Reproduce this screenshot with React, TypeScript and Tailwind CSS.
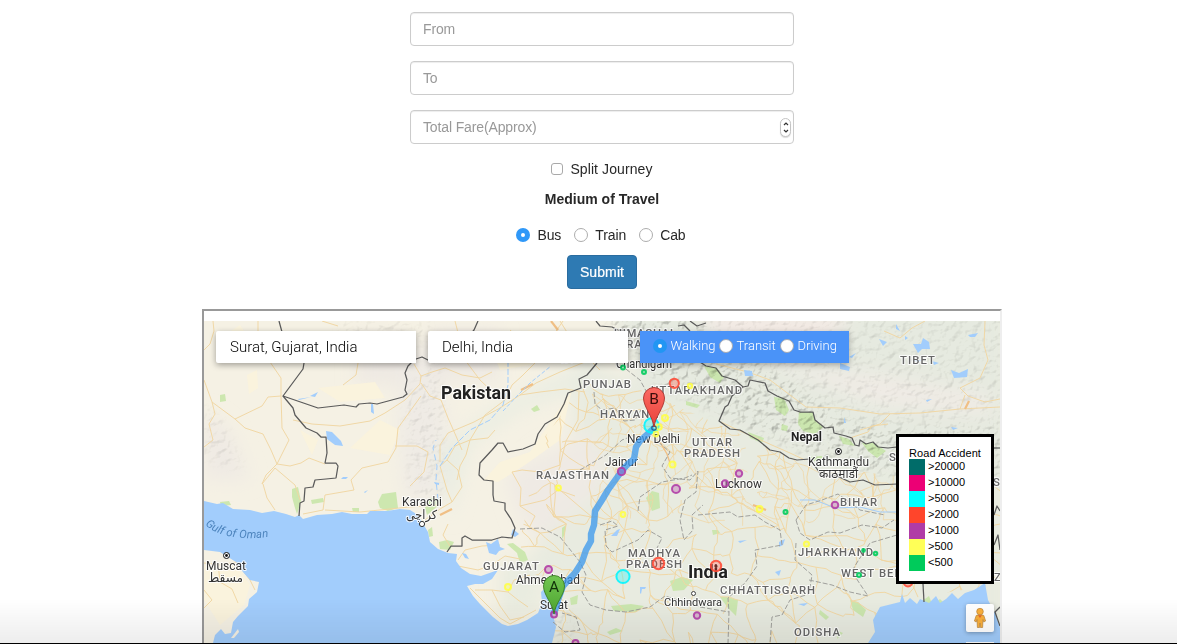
import React, { useState } from "react";

type Pt = [number, number];

const LAND = "#f5f1e4";
const WATER = "#a2cdfc";

/* ---------- road network ---------- */

function seeded(seed: number) {
  let s = seed;
  return () => {
    s = (s * 16807) % 2147483647;
    return s / 2147483647;
  };
}

function roadWeb(x0: number, y0: number, cols: number, rows: number, step: number, density: number, seed: number) {
  const rnd = seeded(seed);
  const nodes: Pt[][] = [];
  for (let r = 0; r < rows; r++) {
    nodes.push([]);
    for (let c = 0; c < cols; c++) {
      nodes[r].push([x0 + c * step + (rnd() - 0.5) * step * 0.9, y0 + r * step + (rnd() - 0.5) * step * 0.9]);
    }
  }
  let d = "";
  const join = (a: Pt, b: Pt) => {
    const p = [1 / 3, 2 / 3].map((t) => [
      a[0] + (b[0] - a[0]) * t + (rnd() - 0.5) * step * 0.22,
      a[1] + (b[1] - a[1]) * t + (rnd() - 0.5) * step * 0.22,
    ]);
    d += `M${a[0].toFixed(1)} ${a[1].toFixed(1)}L${p[0][0].toFixed(1)} ${p[0][1].toFixed(1)}L${p[1][0].toFixed(1)} ${p[1][1].toFixed(1)}L${b[0].toFixed(1)} ${b[1].toFixed(1)}`;
  };
  for (let r = 0; r < rows; r++) {
    for (let c = 0; c < cols; c++) {
      if (c + 1 < cols && rnd() < density) join(nodes[r][c], nodes[r][c + 1]);
      if (r + 1 < rows && rnd() < density) join(nodes[r][c], nodes[r + 1][c]);
      if (r + 1 < rows && c + 1 < cols && rnd() < density * 0.45) join(nodes[r][c], nodes[r + 1][c + 1]);
    }
  }
  return d;
}

const indiaRoads = roadWeb(520, 385, 24, 14, 21, 0.72, 77);
const gangesRoads = roadWeb(600, 400, 20, 8, 17, 0.6, 419);

const handRoads = [
  "M204 350L210 344L214 331L213 321",
  "M204 380L212 402L235 419L262 406L268 397L281 396",
  "M235 419L245 428L263 434L271 450L277 464L266 475L262 484",
  "M212 402L215 414L209 424L213 440L204 447",
  "M281 396L281 378L270 362L258 349L258 321",
  "M281 362L292 350L297 341",
  "M281 396L282 428L289 440L277 464",
  "M277 464L290 466L301 463L309 458L325 464",
  "M293 420L312 424L340 426L370 421L385 413L405 400L420 384L421 376L414 364",
  "M421 376L432 372L445 368L462 375L480 378L492 372",
  "M421 383L430 396L441 400L448 418L456 436L462 450",
  "M421 396L398 428L396 448L388 462L362 468L351 480L354 490L325 495",
  "M395 446L417 446L428 452L424 472L410 486",
  "M263 484L267 498L275 510", "M262 484L275 468L295 485L300 500",
  "M325 495L323 510L303 514", "M325 510L360 512L409 507L440 505",
  "M358 363L356 375L343 385", "M322 321L338 326",
  "M425 520L440 509L452 502L462 487L458 470L447 460L440 466L447 490L452 502",
  "M447 460L455 446L470 440L488 438L495 430",
  "M470 440L466 455L460 466L457 480", "M448 524L443 535L450 546",
  "M440 462L440 445L448 433L474 422L500 408L520 395L536 383L560 372L590 360",
  "M505 400L512 385L522 376L536 362L550 340L563 321",
  "M470 440L485 415L505 400", "M520 395L540 392L565 389L585 392",
  "M455 321L465 360L480 380L497 396", "M510 330L534 352L548 363", "M560 321L575 345L600 370",
  "M562 442L566 441L578 420L579 392", "M566 441L600 442L612 428", "M512 472L522 470L540 472L560 465L566 441", "M512 472L521 488L520 506L535 516L530 526", "M520 506L545 500L558 490L575 496",
  "M716 364L748 372L770 380L790 395L806 407L840 408L880 414L920 413L960 409L1000 407",
  "M884 331L900 338L912 328L925 321", "M985 321L984 345L988 360L980 378L960 388L968 396L985 402L1000 399",
  "M960 409L965 395", "M860 430L880 424L890 414", "M850 438L868 432L872 426L888 424",
  "M721 422L740 431L765 442L790 453L805 460",
  "M204 563L220 565L236 562L250 580L255 590", "M218 563L220 582L232 589L238 603", "M204 590L212 600L204 608",
  "M458 566L478 570L492 565L505 556L520 559", "M458 560L465 550L482 546L500 545",
  "M475 590L492 590L508 592L518 600L528 607", "M492 590L500 606L510 620L524 617", "M508 592L514 580L530 575", "M470 588L482 600L500 618L510 624L536 610",
];

/* ---------- borders ---------- */

const borders = [
  "M279 321L282 332L296 345L304 363L303 369L283 396L318 408L344 405L356 407L359 404L370 403L377 404L403 397L407 394L405 390L407 380L405 373L408 366L412 362L416 359L422 357L428 360L450 352L466 340L474 330L478 321",
  "M283 396L293 408L295 415L306 428L317 433L321 437L326 437L327 453L325 463L336 463L338 466L336 478L326 479L315 480L313 487L305 488L304 501L300 503L299 516",
  "M597 363L587 375L579 379L580 384L581 388L568 393L564 404L557 417L545 424L538 434L535 444L523 449L508 452L503 443L498 443L492 450L480 463L479 475L484 480L493 481L493 495L494 501L505 503L505 510L511 519L515 528L512 538L502 537L492 540L472 540L465 536L462 538L462 546L451 546L447 552",
  "M700 362L706 366L716 368L722 376L735 380L743 387L748 386L750 380L765 383L768 391L777 396L789 401L794 410L800 412L813 412L815 420L825 428L833 427L834 433L846 436L852 438L855 445L859 446L860 440L866 444L873 442L878 447L888 448L897 447",
  "M743 387L732 396L728 405L725 407L719 421L730 429L740 430L758 440L770 450L780 452L789 458L797 460L810 459L822 476L837 476L850 482L863 480L875 485L897 484",
  "M596 321L600 326L612 327L618 330L630 332", "M678 326L684 325L690 331M690 321L697 326L706 323",
  "M923 584L924 602", "M994 448L1000 448", "M994 515L997 506L1000 511", "M994 545L998 535L1000 550", "M1000 607L995 612L1000 626",
];

const stateLines = [
  "M594 392L595 404L602 410L615 408L624 421L635 420L641 410", "M601 346L610 360L622 366L640 380L650 398L651 414L656 440L670 452L662 466L670 478L690 480L698 471L696 492L685 500L680 520L684 540L693 530L692 515L703 505",
  "M520 529L542 528L560 537L572 552L580 562L586 575L582 592L590 605L606 610L626 612L650 607L665 596L700 607L729 612",
  "M600 525L612 521L618 526L605 530L606 546L612 552L638 540L648 530L662 538L657 548",
  "M638 511L640 497L662 482L685 478L692 475", "M698 515L730 512L738 517L755 515L765 522L780 530L782 545L755 550L757 566L745 583L728 598L729 612L728 643",
  "M796 520L806 505L822 500L838 494L860 510L885 515", "M796 520L800 533L810 540L828 532L840 533L862 525L882 528L894 520",
  "M796 543L795 560L812 575L809 594L790 600L782 615L772 617L770 643", "M809 580L832 585L850 592L868 596L858 581L852 571L858 561L870 543L897 535",
  "M553 622L565 632L580 630L576 617L562 613", "M580 470L606 455L622 440L635 435",
];

const parks = [
  "M220 395l5-1l1 7l-6 1z", "M292 489l6-2l3 14l-4 13l-2-6l-3-11z", "M311 500l12-2l1 4l-12 2z", "M378 502l4-8l14-2l2 16l-10 3l-8-3z",
  "M220 502l9-1l2 4l-10 1z", "M352 508l7 0l0 4l-6 0z", "M425 507l5-9l10 1l-1 6l-12 10z", "M428 530l4-3l1 9l-4 1z", "M439 542l8-2l7 2l-4 8l-10-1z",
  "M531 409l6-4l3 5l-6 2z", "M507 544l6-1l12 9l3 8l-8 3l-3-10z", "M562 528l4-3l-1 9l-3 5z", "M646 498l6-7l7 2l1 15l-8 3z",
  "M670 581l12-4l11 3l-9 10l-11 1z", "M611 606l20-2l13 2l-8 6l-22-1z", "M570 598l8-3l-1 9l-6 1z", "M607 632l9-4l7 3l-13 4z",
  "M774 397l10 1l5 12l-4 6l-9-6z", "M799 412l14 0l2 8l8 7l-8 7l-12-3l-5-7z", "M782 424l6 2l-1 5l-6-1z", "M839 436l10 3l6 7l-12-2z", "M862 443l12 0l12 8l-9 7l-9-7z",
  "M704 366l13 2l7 9l-4 6l-10-6z", "M748 432l16 6l-2 5l-12-5z", "M686 401l14 4l-3 3l-11-3z",
  "M850 600l8 2l8 8l-3 7l-10-7z", "M838 631l5 2l-6 6z", "M720 597l8 0l10 3l-2 16l-8-8z", "M712 530l6 0l2 3l-7 2z", "M820 610l9 7l-3 3l-7-6z", "M810 457l12-1l2 3l-10 2z", "M921 602l8-6l3 8l-8 1z", "M933 605l7-6l4 4l-7 4z",
];

const lakes = [
  "M326 431l6 1l9 9l2 5l-8-1l-8-6z", "M298 399l13-2l-8 2l-4 1z", "M310 396l8-4l-3 5z", "M371 404l2 0l1 10l-3-2z",
  "M343 477l5 0l-2 2l-5 0z", "M364 492l4-2l-3 3z", "M744 370l8 1l1 5l-8 0z", "M840 363l10 4l-1 4l-9-2z", "M913 344l8 0l2-6l6 4l1 7l-8 0l-4 4z", "M951 370l8 3l9-4l-1 8l-13 1z",
  "M879 339l8 3l-4 4z", "M849 357l7-4l-4 5z", "M896 324l4 7l-4-2z", "M905 336l3 2l-3 2z", "M912 360l10 0l-4 2z", "M844 417l2 6l-2 0z", "M951 427l7 1l-5 2z", "M926 400l6-1l-5 3z", "M968 335l10-2l-3 4l-5 0z", "M932 361l7 2l-5 2z",
  "M486 542l5 2l7-5l2 8l5 2l-6 2l-3 4l-7-2z", "M513 529l6 5l-4 3l-4-2z", "M611 536l6-6l3-1l-3 7z", "M640 587l6 0l-1 2l-3 0l-1 5l-1-1z", "M779 542l6-3l-2 6l-4 2z", "M738 541l9-1l-7 3z", "M798 604l10-1l-4 3z", "M775 572l6-2l-2 6z",
  "M462 553l4 1l3 5l-4-1z", "M434 482l5 1l0 2l-4-1z",
];

/* ---------- labels ---------- */

interface Label {
  t: string;
  x: number;
  y: number;
  w?: number;
  kind: "country" | "state" | "city";
  size?: number;
}

const labels: Label[] = [
  { t: "Pakistan", x: 441, y: 399, w: 70, kind: "country", size: 17.5 },
  { t: "India", x: 688, y: 578, w: 40, kind: "country", size: 17.5 },
  { t: "Nepal", x: 791, y: 441, w: 31, kind: "country", size: 12 },
  { t: "TIBET", x: 900, y: 364, w: 35, kind: "state" },
  { t: "PUNJAB", x: 583, y: 388, w: 48, kind: "state" },
  { t: "HARYANA", x: 600, y: 418, w: 58, kind: "state" },
  { t: "UTTARAKHAND", x: 651, y: 394, w: 91, kind: "state" },
  { t: "HIMACHAL", x: 614, y: 337, w: 62, kind: "state" },
  { t: "PRADESH", x: 618, y: 348, w: 56, kind: "state" },
  { t: "UTTAR", x: 692, y: 446, w: 40, kind: "state" },
  { t: "PRADESH", x: 684, y: 457, w: 56, kind: "state" },
  { t: "RAJASTHAN", x: 536, y: 479, w: 73, kind: "state" },
  { t: "GUJARAT", x: 483, y: 570, w: 56, kind: "state" },
  { t: "MADHYA", x: 628, y: 557, w: 52, kind: "state" },
  { t: "PRADESH", x: 626, y: 568, w: 56, kind: "state" },
  { t: "CHHATTISGARH", x: 720, y: 594, w: 95, kind: "state" },
  { t: "ODISHA", x: 794, y: 636, w: 46, kind: "state" },
  { t: "JHARKHAND", x: 798, y: 556, w: 75, kind: "state" },
  { t: "WEST BENGAL", x: 841, y: 577, w: 86, kind: "state" },
  { t: "BIHAR", x: 840, y: 506, w: 37, kind: "state" },
  { t: "S", x: 889, y: 461, kind: "state" },
  { t: "S", x: 993, y: 486, kind: "state" },
  { t: "Z", x: 994, y: 581, kind: "state" },
  { t: "Karachi", x: 402, y: 506.3, w: 40, kind: "city" },
  { t: "کراچی", x: 406, y: 519, w: 31, kind: "city", size: 12.5 },
  { t: "Muscat", x: 206, y: 570.3, w: 40, kind: "city" },
  { t: "مسقط", x: 208, y: 582, w: 35, kind: "city", size: 12.5 },
  { t: "لاہور", x: 562, y: 361, w: 16, kind: "city", size: 10 },
  { t: "Chandigarh", x: 616, y: 368, w: 56, kind: "city" },
  { t: "New Delhi", x: 627, y: 443.3, w: 53, kind: "city" },
  { t: "Jaipur", x: 605, y: 466.3, w: 33, kind: "city" },
  { t: "Ahmedabad", x: 516, y: 584.3, w: 64, kind: "city" },
  { t: "Surat", x: 540, y: 609.3, w: 28, kind: "city" },
  { t: "Lucknow", x: 715, y: 488.3, w: 47, kind: "city" },
  { t: "Kathmandu", x: 808, y: 466.3, w: 61, kind: "city" },
  { t: "काठमाडौं", x: 819, y: 478, w: 39, kind: "city" },
  { t: "Chhindwara", x: 664, y: 606.3, w: 58, kind: "city", size: 11.5 },
];

function MapLabel({ l }: { l: Label }) {
  const cls =
    l.kind === "country"
      ? "fill-[#222] font-bold"
      : l.kind === "state"
        ? "fill-[#666] font-medium"
        : "fill-[#333] font-normal";
  const size = l.size ?? (l.kind === "state" ? 11.3 : 12.2);
  return (
    <text
      x={l.x}
      y={l.y}
      fontSize={size}
      textLength={l.w}
      lengthAdjust={l.kind === "state" ? "spacing" : "spacingAndGlyphs"}
      stroke="#fff"
      strokeOpacity={0.8}
      strokeWidth={2.2}
      strokeLinejoin="round"
      paintOrder="stroke"
      className={cls}
    >
      {l.t}
    </text>
  );
}

/* ---------- accident circles ---------- */

const colours = { red: "#ff4a36", cyan: "#00f6ff", purple: "#b03ba6", yellow: "#ffff45", green: "#00cc5c" };

const spots: [number, number, number, keyof typeof colours][] = [
  [623, 367.5, 2, "green"], [644, 372, 2, "green"], [674.3, 383.3, 4.6, "red"], [690, 386, 2.2, "yellow"],
  [651.5, 425.5, 7.2, "cyan"], [665, 418, 3, "yellow"], [659, 427, 2.8, "yellow"], [656, 434, 2.4, "yellow"], [672.5, 464.5, 3, "yellow"],
  [621.5, 471.5, 3.7, "purple"], [676, 489, 4, "purple"], [558.5, 488, 2.4, "yellow"], [623, 514.5, 2.4, "yellow"],
  [548.5, 569.5, 3.5, "purple"], [508, 587, 3, "yellow"], [623, 576.5, 6.6, "cyan"], [658.5, 563.5, 5.7, "red"], [716, 566, 5.2, "red"],
  [697, 615.5, 3.2, "purple"], [554, 614.5, 3, "purple"], [575.5, 643, 3, "purple"], [739, 473.5, 3.2, "purple"], [725, 483.5, 3.2, "purple"],
  [759.5, 509, 3, "yellow"], [785.5, 512, 2, "green"], [835, 505, 3.3, "purple"], [806.5, 544, 2.6, "yellow"],
  [863.5, 550.5, 1.4, "green"], [875.5, 553.5, 1.8, "green"], [859, 575, 2, "green"], [908, 582, 4.4, "red"],
];

function Pin({ x, y, cy, letter, tone }: { x: number; y: number; cy: number; letter: string; tone: "red" | "green" }) {
  return (
    <g>
      <path
        d={`M${x} ${y}C${x - 1} ${y - 10} ${x - 10.5} ${cy + 9} ${x - 10.5} ${cy}A10.5 10.5 0 0 1 ${x + 10.5} ${cy}C${x + 10.5} ${cy + 9} ${x + 1} ${y - 10} ${x} ${y}Z`}
        fill={tone === "red" ? "url(#pinRed)" : "url(#pinGreen)"}
        stroke={tone === "red" ? "#a8322c" : "#3a7d23"}
        strokeWidth={0.9}
      />
      <text x={x} y={cy + 6} textAnchor="middle" fontSize={15.5} className={tone === "red" ? "fill-[#3b0d0b]" : "fill-[#12330a]"}>
        {letter}
      </text>
    </g>
  );
}

function MapCanvas() {
  return (
    <svg viewBox="204 321 796 322" className="block h-[322px] w-[796px] font-['Roboto','Noto_Sans','DejaVu_Sans',sans-serif]">
      <defs>
        <filter id="relief" x="0" y="0" width="100%" height="100%" colorInterpolationFilters="sRGB">
          <feTurbulence type="fractalNoise" baseFrequency="0.12 0.14" numOctaves={3} seed={8} result="n" />
          <feDiffuseLighting in="n" surfaceScale={2.4} diffuseConstant={1} lightingColor="#fff" result="lit">
            <feDistantLight azimuth={225} elevation={50} />
          </feDiffuseLighting>
          <feComponentTransfer in="lit">
            <feFuncR type="linear" slope="1.36" />
            <feFuncG type="linear" slope="1.36" />
            <feFuncB type="linear" slope="1.34" />
          </feComponentTransfer>
        </filter>
        <filter id="soft"><feGaussianBlur stdDeviation="9" /></filter>
        <filter id="softer"><feGaussianBlur stdDeviation="4" /></filter>
        <mask id="hills">
          <g filter="url(#softer)" fill="#fff">
            <path d="M600 310L690 310L725 350L790 380L850 420L900 430L1000 430L1000 480L890 476L800 452L720 415L660 385L628 345Z" />
            <path d="M690 310H1010V445H890L850 425L790 385L725 360Z" fillOpacity={0.35} />
            <path d="M405 400L436 350L445 420L440 500L410 490Z" fillOpacity={0.35} />
            <path d="M204 400L225 425L245 470L204 460Z" fillOpacity={0.3} />
            <path d="M340 321H430V345H340Z" fillOpacity={0.3} />
            <path d="M556 615L572 612L570 643H553Z" fillOpacity={0.4} />
          </g>
        </mask>
        <linearGradient id="pinRed" x1="0" y1="0" x2="0" y2="1">
          <stop offset="0" stopColor="#fc6a62" /><stop offset="1" stopColor="#e8423b" />
        </linearGradient>
        <linearGradient id="pinGreen" x1="0" y1="0" x2="0" y2="1">
          <stop offset="0" stopColor="#72c752" /><stop offset="1" stopColor="#4ea430" />
        </linearGradient>
        <path id="gulf" d="M205 525C219 537 241 541 275 536" />
        <clipPath id="indiaClip">
          <path d="M590 368L640 390L722 426L810 466L1000 488V584L900 600L872 622L866 643H556L553 612L545 580L520 565L522 530L530 500L520 470L565 410Z" />
        </clipPath>
      </defs>

      <rect x="204" y="321" width="796" height="322" fill={LAND} />
      <g filter="url(#soft)">
        <path d="M580 355L640 385L740 430L810 455L910 480L1010 480V660H545L560 590L525 560L560 520L610 470L570 430Z" fill="#e8ebe0" />
        <path d="M610 300H1010V480H890L720 425L640 390Z" fill="#e6eae0" />
        <path d="M690 300L850 310L835 340L790 360L720 345Z" fill="#f2eae4" />
        <path d="M770 365L880 375L990 395L990 415L880 405Z" fill="#f0ebe5" />
        <path d="M505 475L590 430L605 460L600 490L540 540L520 520Z" fill="#efeae4" />
        <path d="M400 350L440 345L448 440L438 500L405 500L398 430Z" fill="#efebe5" />
        <path d="M438 450L500 405L580 365L590 385L520 410L470 445L450 520Z" fill="#e9ede2" />
        <path d="M356 335H405V385H356Z" fill="#eee9e3" />
        <path d="M430 330H500V380H430Z" fill="#eee9e3" />
        <path d="M204 410L230 430L250 480L204 480Z" fill="#efeae4" />
        <path d="M500 560L540 560L545 610L500 620Z" fill="#e9ece0" />
      </g>
      <g fill="#fbf3dc" fillOpacity={0.9}>
        <path d="M484 480L500 462L530 452L545 430L572 390L560 440L525 465L498 482Z" />
        <path d="M247 375L257 370L258 388L249 394Z" /><path d="M318 388L375 382L385 398L340 402Z" /><path d="M350 448L380 420L400 430L390 455Z" />
        <path d="M225 335L240 325L250 340L228 350Z" /><path d="M300 430L318 440L312 455Z" />
        <path d="M490 345L530 330L580 335L530 365L500 370Z" /><path d="M204 565L235 563L250 585L244 605L220 625L204 600Z" />
      </g>
      <g fill="#c5e5a6" fillOpacity={0.85}>{parks.map((d) => <path key={d} d={d} />)}</g>
      <g mask="url(#hills)" className="mix-blend-multiply" opacity={0.4}>
        <rect x="204" y="321" width="796" height="322" filter="url(#relief)" />
      </g>

      <g fill="none" stroke="#f0d6a2" strokeWidth={0.95} strokeLinejoin="round">
        <g clipPath="url(#indiaClip)">
          <path d={indiaRoads} />
          <path d={gangesRoads} strokeWidth={0.7} />
        </g>
        {handRoads.map((d) => <path key={d} d={d} />)}
      </g>
      <g fill="none" stroke="#f0bf85" strokeWidth={2.2}>
        <path d="M440 515L452 509" /><path d="M521 390L533 384" /><path d="M551 321L558 330" /><path d="M965 409L969 401" /><path d="M660 442L667 454L670 463" strokeWidth={1.4} /><path d="M753 505L766 510" />
      </g>

      <g fill={WATER}>
        <path d="M204 501L217 504L223 503L233 509L250 510L262 513L274 511L286 514L295 517L299 515L303 519L317 515L332 514L342 512L352 514L367 514L370 511L387 511L400 509L410 510L418 515L422 522L428 532L430 542L438 549L448 553L457 554L456 561L461 568L470 574L481 576L498 570L492 579L483 584L475 584L467 586L473 596L480 604L493 617L502 624L508 626L518 624L527 620L538 613L542 603L541 592L547 586L552 598L553 615L556 627L552 643H213L215 635L221 629L225 634L231 633L233 622L238 616L248 606L249 599L257 592L259 582L250 580L243 572L236 562L220 552L204 550Z" />
        <path d="M868 643L875 632L873 620L880 607L900 602L902 594L905 603L910 598L917 604L920 599L929 603L936 596L940 603L946 599L952 593L958 599L965 593L974 590L985 583L988 600L995 613L1000 628V643Z" />
        {lakes.map((d) => <path key={d} d={d} />)}
      </g>
      <path d="M238 629L239 632L234 638L231 638Z" fill={LAND} />
      <g fill="none" stroke="#a2cdfc" strokeWidth={1}>
        <path d="M438 500L436 480L437 466L433 448L436 440" strokeDasharray="6 4" /><path d="M440 466L452 448L470 430L490 420L503 405L508 385L508 363" strokeDasharray="6 2" />
        <path d="M503 411L518 395L530 383L551 366" strokeDasharray="4 2" /><path d="M800 500L815 500L835 508L860 507L880 512L897 512" />
      </g>

      <g fill="none" stroke="#a0a09c" strokeWidth={1} strokeDasharray="5 2">{stateLines.map((d) => <path key={d} d={d} />)}</g>
      <g fill="none" stroke="#5a5a5a" strokeWidth={1.25} strokeLinejoin="round">{borders.map((d) => <path key={d} d={d} />)}</g>

      <text fontSize={11.3} className="fill-[#4d84bd] italic" letterSpacing={0.15}>
        <textPath href="#gulf">Gulf of Oman</textPath>
      </text>
      {labels.map((l) => <MapLabel key={`${l.t}${l.x}`} l={l} />)}

      {[[226.5, 555.5], [838.5, 451.5]].map(([x, y]) => (
        <g key={x}>
          <circle cx={x} cy={y} r={3} fill="#fff" stroke="#111" strokeWidth={1} />
          <circle cx={x} cy={y} r={1.4} fill="#111" />
        </g>
      ))}
      <circle cx={422} cy={524} r={2.6} fill="#fff" stroke="#333" strokeWidth={1} />
      <circle cx={693.5} cy={593.5} r={2} fill="#fff" stroke="#444" strokeWidth={1} />
      <circle cx={716} cy={566.5} r={1.5} fill="#222" />

      <path
        d="M654 428L640 441L636 447L634 459L627 465L621 472L608 490L602 500L595 511L594 525L591 534L591 541L586 550L582 562L575 573L563 586L558 600L554 614"
        fill="none" stroke="#3897ee" strokeOpacity={0.75} strokeWidth={6.4} strokeLinejoin="round"
      />
      {spots.map(([x, y, r, c]) => (
        <circle key={`${x}-${y}`} cx={x} cy={y} r={r} fill={colours[c]} fillOpacity={0.3} stroke={colours[c]} strokeOpacity={0.88} strokeWidth={2} />
      ))}
      <circle cx={654} cy={428} r={2.2} fill="none" stroke="#23628e" strokeWidth={1.2} />
      <Pin x={654} y={427} cy={398} letter="B" tone="red" />
      <Pin x={554} y={614} cy={586} letter="A" tone="green" />
    </svg>
  );
}

/* ---------- map overlays ---------- */

const legend = [
  ["bg-[#006c69]", ">20000"],
  ["bg-[#ec0075]", ">10000"],
  ["bg-[#00ffff]", ">5000"],
  ["bg-[#ff452b]", ">2000"],
  ["bg-[#b03ba6]", ">1000"],
  ["bg-[#ffff57]", ">500"],
  ["bg-[#00cb5b]", "<500"],
];

function Legend() {
  return (
    <div className="absolute top-[113px] left-[692px] h-[150px] w-[98px] border-[3px] border-black bg-white pt-[9px] pl-[10px] text-[11px] leading-[13px] text-black">
      <div className="h-[13px] pt-px tracking-[0.08px] whitespace-nowrap">Road Accident</div>
      {legend.map(([bg, text]) => (
        <div key={text} className="flex h-4 items-start">
          <span className={`h-4 w-4 ${bg}`} />
          <span className="ml-[3px] pt-px">{text}</span>
        </div>
      ))}
    </div>
  );
}

function Pegman() {
  return (
    <div className="absolute top-[283px] left-[762px] flex h-7 w-7 items-center justify-center rounded-[2px] bg-white shadow-[0_1px_4px_rgba(0,0,0,0.3)]">
      <svg viewBox="0 0 14 22" className="h-[22px] w-[14px]">
        <path d="M3.2 8.5Q7 6.5 10.8 8.5L12.6 14L10.8 15L10 12.5L9.6 20.5H7.4L7 16L6.6 20.5H4.4L4 12.5L3.2 15L1.4 14Z" fill="#fbb03b" stroke="#b9853f" strokeWidth="0.7" />
        <path d="M5 8.3L7 11L9 8.3Z" fill="#e8652d" />
        <circle cx="7" cy="4.6" r="3.3" fill="#fbb03b" stroke="#b9853f" strokeWidth="0.7" />
      </svg>
    </div>
  );
}

function ModePicker() {
  const [mode, setMode] = useState("Walking");
  return (
    <div className="flex h-8 w-[209px] items-start bg-[#4a93f8] pt-[7px] pl-[13px] font-['Roboto',sans-serif] text-[13px] leading-4 font-light text-white shadow-[0_2px_6px_rgba(0,0,0,0.3)]">
      {[
        ["Walking", "w-[66px]", "w-[45px]"],
        ["Transit", "w-[61px]", "w-[39px]"],
        ["Driving", "w-[58px]", "w-[39px]"],
      ].map(([m, w, tw]) => (
        <button key={m} onClick={() => setMode(m)} className={`flex shrink-0 items-center gap-1 ${w}`}>
          <span
            className={
              m === mode
                ? "flex h-[14px] w-[14px] shrink-0 items-center justify-center rounded-full bg-[#2196f3]"
                : "h-[14px] w-[14px] shrink-0 rounded-full border border-[#a5aab4] bg-white"
            }
          >
            {m === mode && <span className="h-1 w-1 rounded-full bg-white" />}
          </span>
          <span className={`-ml-[0.5px] text-left whitespace-nowrap ${tw}`}>{m}</span>
        </button>
      ))}
    </div>
  );
}

function PlaceInput({ value }: { value: string }) {
  return (
    <input
      defaultValue={value}
      className="h-8 w-[200px] rounded-l-[2px] bg-white px-[14px] font-['Roboto',sans-serif] text-[15px] font-light text-black shadow-[0_2px_6px_rgba(0,0,0,0.35)] outline-none"
    />
  );
}

/* ---------- form ---------- */

function Field({ placeholder, stepper }: { placeholder: string; stepper?: boolean }) {
  return (
    <div className="flex h-[34px] w-full items-center rounded-[4px] border border-[#ccc] bg-white pr-[2px] pl-3 shadow-[inset_0_1px_1px_rgba(0,0,0,0.075)]">
      <input placeholder={placeholder} className="min-w-0 flex-1 bg-transparent text-[14px] tracking-[-0.13px] text-[#555] outline-none placeholder:text-[#999]" />
      {stepper && (
        <span className="flex h-[19px] w-[11px] flex-col items-center justify-center gap-[3px] rounded-full border border-[#c4c4c4] bg-white shadow-[0_1px_1px_rgba(0,0,0,0.15)]">
          <svg viewBox="0 0 6 4" className="h-1 w-[6px]"><path d="M1 3L3 1L5 3" fill="none" stroke="#333" strokeWidth="1.2" /></svg>
          <svg viewBox="0 0 6 4" className="h-1 w-[6px]"><path d="M1 1L3 3L5 1" fill="none" stroke="#333" strokeWidth="1.2" /></svg>
        </span>
      )}
    </div>
  );
}

function TravelRadios() {
  const [medium, setMedium] = useState("Bus");
  return (
    <div className="mr-[2px] flex h-5 items-center gap-[13px]">
      {["Bus", "Train", "Cab"].map((m) => (
        <button key={m} onClick={() => setMedium(m)} className="flex items-center gap-[7px]">
          <span
            className={
              m === medium
                ? "flex h-[14px] w-[14px] items-center justify-center rounded-full bg-[#2f98f8]"
                : "h-[14px] w-[14px] rounded-full border border-[#adadad] bg-white"
            }
          >
            {m === medium && <span className="h-1 w-1 rounded-full bg-white" />}
          </span>
          <span className="tracking-[-0.1px]">{m}</span>
        </button>
      ))}
    </div>
  );
}

export default function App() {
  return (
    <div className="relative h-[644px] w-[1177px] overflow-hidden bg-white font-['Liberation_Sans',Arial,sans-serif] text-[14px] leading-5 text-[#282828]">
      <div className="ml-[202px] flex w-[800px] flex-col items-center pt-3">
        <div className="flex w-96 flex-col gap-[15px]">
          <Field placeholder="From" />
          <Field placeholder="To" />
          <Field placeholder="Total Fare(Approx)" stepper />
        </div>
        <label className="mt-[15px] flex h-5 items-center gap-[7px]">
          <span className="h-3 w-3 rounded-[3px] border border-[#a9a9a9] bg-white" />
          <span className="tracking-[0.1px]">Split Journey</span>
        </label>
        <div className="mt-[10px] h-5 font-bold">Medium of Travel</div>
        <div className="mt-4">
          <TravelRadios />
        </div>
        <button className="mt-[10px] h-[34px] w-[70px] rounded-[4px] border border-[#2a6c9f] bg-[#2e7ab3] text-[14px] tracking-[0.1px] text-white [-webkit-text-stroke:0.2px_#fff]">Submit</button>
        <div className="mt-5 w-[800px] border-2 border-t-[#999] border-r-[#eee] border-b-[#eee] border-l-[#999] pt-[10px]">
          <div className="relative h-[322px] w-[796px] overflow-hidden">
            <MapCanvas />
            <div className="absolute top-[10px] left-3 flex gap-3">
              <PlaceInput value="Surat, Gujarat, India" />
              <PlaceInput value="Delhi, India" />
              <ModePicker />
            </div>
            <Legend />
            <Pegman />
            <div className="absolute top-[321px] left-[762px] h-2 w-7 bg-white" />
          </div>
        </div>
      </div>
      <div className="pointer-events-none absolute inset-x-0 bottom-px h-11 bg-linear-to-b from-transparent to-black/[0.07]" />
      <div className="absolute inset-x-0 bottom-0 h-px bg-black" />
    </div>
  );
}
